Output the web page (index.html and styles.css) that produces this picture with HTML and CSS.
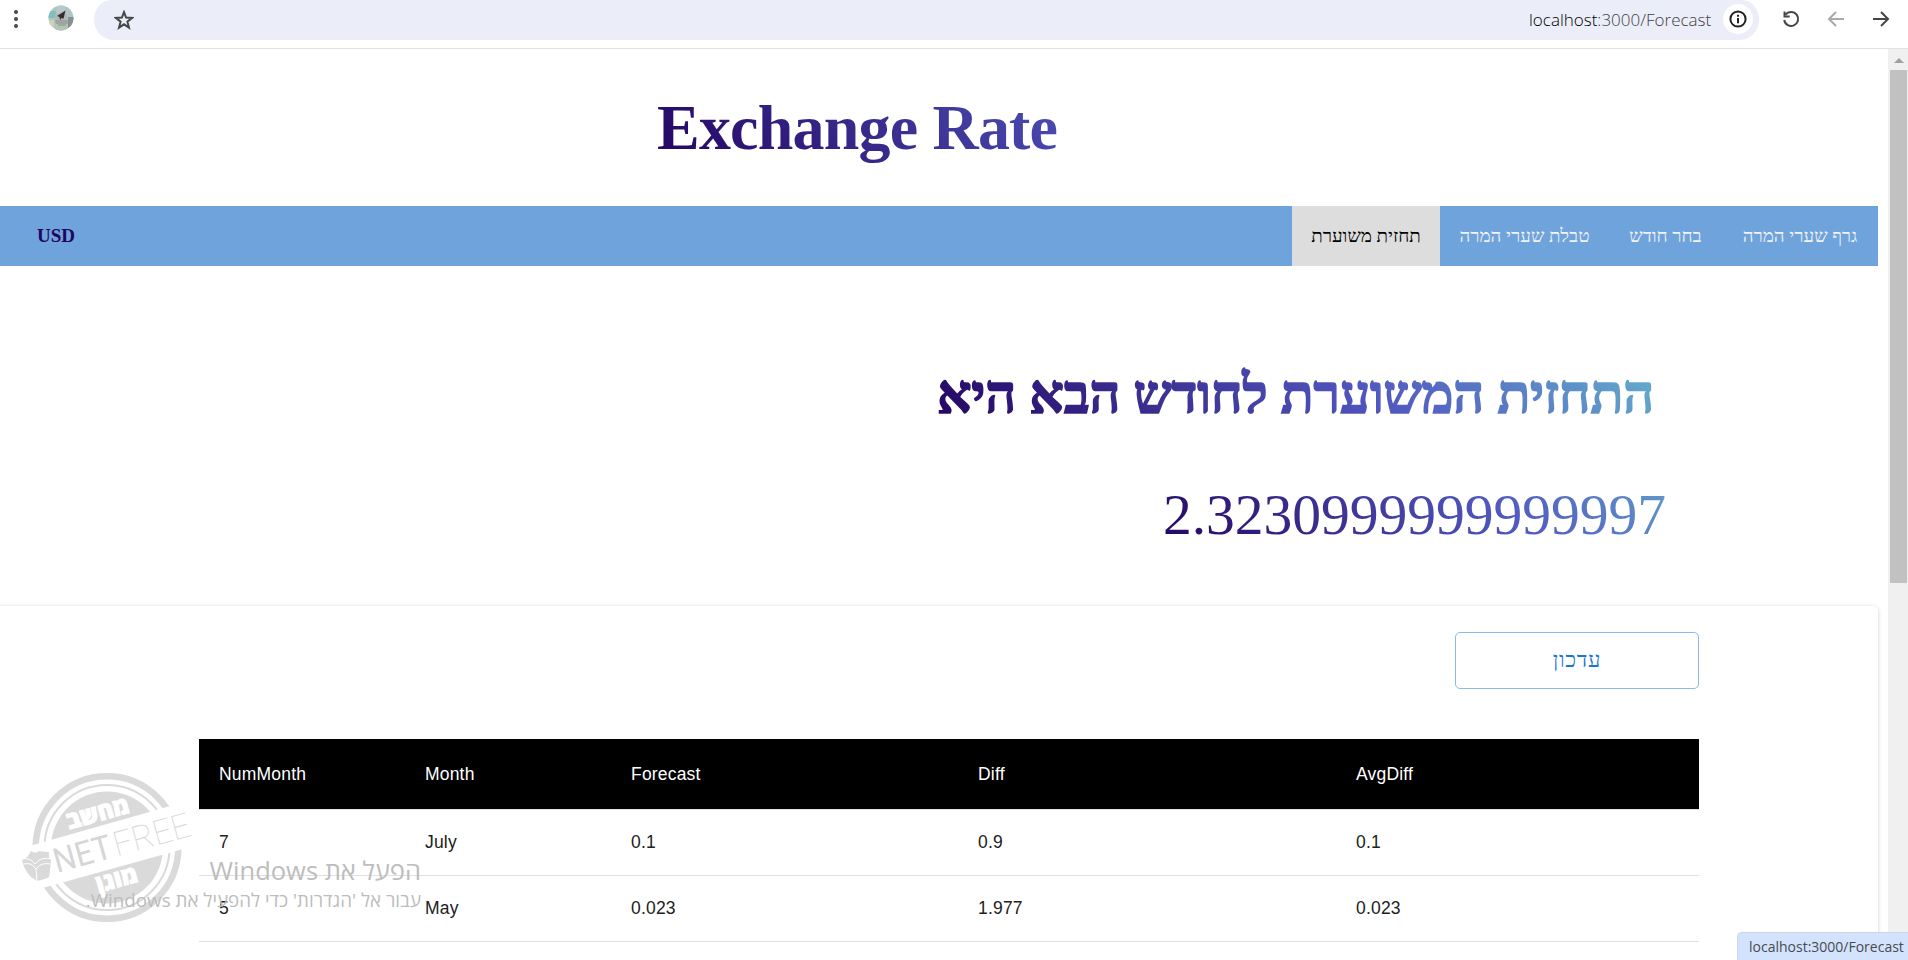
FILE: index.html
```html
<!DOCTYPE html>
<html lang="he">
<head>
<meta charset="utf-8">
<title>Exchange Rate</title>
<link rel="stylesheet" href="styles.css">
</head>
<body>
<div class="window">
  <header class="toolbar">
    <svg class="dots" width="6" height="20" viewBox="0 0 6 20"><circle cx="3" cy="3" r="2"/><circle cx="3" cy="10" r="2"/><circle cx="3" cy="17" r="2"/></svg>
    <svg class="avatar" width="26" height="26" viewBox="0 0 26 26">
      <defs><clipPath id="round"><circle cx="13" cy="13" r="12.5"/></clipPath></defs>
      <g clip-path="url(#round)">
        <rect width="26" height="26" fill="#abc6c3"/>
        <path d="M0 6h8v7H0z" fill="#7fbfbd"/><path d="M9 0h8v8H9z" fill="#b9c8ca"/>
        <path d="M7 9h12v11H7z" fill="#b3b8b6"/><path d="M20 12h6v11h-6z" fill="#83918f"/>
        <path d="M0 15h6v8H0z" fill="#cdd2b6"/><path d="M7 19h13v7H7z" fill="#b4c4b3"/>
        <path d="M17.500 5.500L9 11l2.500 1 .5 3 1.500-2 2 .8z" fill="#3a2b2c"/>
        <path d="M7 16h13M8 18h12M10 20h8" stroke="#7d8583" stroke-width=".8"/>
      </g>
    </svg>
    <div class="address">
      <svg class="star" width="20" height="20" viewBox="0 0 20 20"><path d="M10 2.100l2.100 5.500 6 .3-4.700 3.800 1.600 5.900L10 14.300l-5 3.300 1.600-5.900L1.900 7.900l6-.3z"/></svg>
      <span class="url"><b>localhost</b>:3000/Forecast</span>
      <span class="info"><svg width="18" height="18" viewBox="0 0 18 18"><circle cx="9" cy="9" r="7.600"/><path d="M9 8v5.200M9 4.700v2"/></svg></span>
    </div>
    <svg class="nav-icon" width="18" height="18" viewBox="0 0 18 18"><path d="M3.600 4.600A7 7 0 1 1 2.200 10M2.500 1.500v5h5.200"/></svg>
    <svg class="nav-icon faded" width="18" height="18" viewBox="0 0 18 18"><path d="M17 9H2.500M9 2L2 9l7 7"/></svg>
    <svg class="nav-icon" width="18" height="18" viewBox="0 0 18 18"><path d="M1 9h14.500M9 2l7 7-7 7"/></svg>
  </header>
  <div class="viewport">
    <main class="page">
      <h1 class="title"><span>Exchange Rate</span></h1>
      <nav class="menu">
        <span class="currency">USD</span>
        <a class="tab tab-forecast active" dir="rtl">תחזית משוערת</a>
        <a class="tab tab-rates" dir="rtl">טבלת שערי המרה</a>
        <a class="tab tab-month" dir="rtl">בחר חודש</a>
        <a class="tab tab-chart" dir="rtl">גרף שערי המרה</a>
      </nav>
      <h2 class="forecast-title" dir="rtl">התחזית המשוערת לחודש הבא היא</h2>
      <p class="forecast-value">2.3230999999999997</p>
      <section class="paper">
        <button class="update" dir="rtl">עדכון</button>
        <table class="rates">
          <colgroup><col class="c1"><col class="c2"><col class="c3"><col class="c4"><col class="c5"></colgroup>
          <thead><tr><th>NumMonth</th><th>Month</th><th>Forecast</th><th>Diff</th><th>AvgDiff</th></tr></thead>
          <tbody>
            <tr><td>7</td><td>July</td><td>0.1</td><td>0.9</td><td>0.1</td></tr>
            <tr><td>5</td><td>May</td><td>0.023</td><td>1.977</td><td>0.023</td></tr>
          </tbody>
        </table>
      </section>
    </main>
    <div class="scrollbar"><i class="arrow"></i><i class="thumb"></i></div>
  </div>

  <svg class="stamp" width="200" height="160" viewBox="0 0 200 160">
    <defs>
      <mask id="band"><rect width="200" height="160" fill="#fff"/><path d="M0 84.500L200 27.500V74.300L0 129.800z" fill="#000"/></mask>
    </defs>
    <g mask="url(#band)">
      <circle cx="107" cy="77.500" r="71.300" fill="none" stroke="#dadada" stroke-width="6.500"/>
      <circle cx="107" cy="77.500" r="62.500" fill="none" stroke="#dadada" stroke-width="2"/>
      <circle cx="107" cy="77.500" r="56" fill="#dadada"/>
    </g>
    <g transform="translate(57 103) rotate(-15.500)">
      <text class="net" x="0" y="0" textLength="59" lengthAdjust="spacingAndGlyphs">NET</text>
      <text class="free" x="62" y="0" textLength="79" lengthAdjust="spacingAndGlyphs">FREE</text>
    </g>
    <text class="stamp-he" transform="translate(100 51) rotate(-15.500)" textLength="64" lengthAdjust="spacingAndGlyphs">מחשב</text>
    <text class="stamp-he" transform="translate(119 117) rotate(-15.500)" textLength="42" lengthAdjust="spacingAndGlyphs">מוגן</text>
    <path d="M22 41q5-1 9-9q5 3 8 0q7 1 10 1q-1 5 2 8q-1 13-2 17q-3 2-12 4q-12-6-15-21z" transform="translate(0 49)" fill="#dadada"/>
    <path d="M21 39q9-2 14 5q6-8 17-5M24 44q8-2 12 5q5-7 14-5M36 48l1 14" transform="translate(0 50)" fill="none" stroke="#fff" stroke-width="1"/>
  </svg>
  <div class="activate" dir="rtl">
    <div class="activate-title"><span>הפעל את Windows</span></div>
    <div class="activate-text"><span>עבור אל 'הגדרות' כדי להפעיל את Windows.</span></div>
  </div>
  <div class="status">localhost:3000/Forecast</div>
</div>
</body>
</html>
```
FILE: styles.css
```css
* { box-sizing: border-box; }
body { margin: 0; background: #fff; font-family: "Liberation Serif", serif; }
.window { position: relative; width: 1908px; height: 960px; overflow: hidden; display: flex; flex-direction: column; }

/* browser toolbar */
.toolbar { height: 49px; flex: none; display: flex; align-items: flex-start; border-bottom: 1px solid #dfe1e1; }
.dots { margin: 9px 0 0 13px; fill: #444746; }
.avatar { margin: 5px 0 0 29px; }
.address { width: 1665px; height: 40px; margin-left: 20px; background: #ebeef8; border-radius: 17px 17px 20px 20px / 20px; display: flex; align-items: center; padding: 0 6px 0 20px; }
.star { fill: none; stroke: #444746; stroke-width: 2; }
.url { margin-left: auto; font: 300 17px/38px "Open Sans", sans-serif; color: #3c4045; width: 183px; white-space: nowrap; }
.url b { font-weight: 300; color: #000; }
.info { width: 30px; height: 30px; margin-left: 11px; margin-top: -2px; border-radius: 50%; background: #fff; display: grid; place-items: center; }
.info svg { fill: none; stroke: #1f2023; stroke-width: 2; }
.nav-icon { margin: 10px 0 0 23px; fill: none; stroke: #444746; stroke-width: 2; }
.nav-icon + .nav-icon { margin-left: 27px; }
.faded { stroke: #a8aaab; }

/* page */
.viewport { flex: 1; display: flex; min-height: 0; }
.page { width: 1878px; margin-right: 10px; height: 911px; }
.title, .forecast-title, .forecast-value { background: linear-gradient(45deg, #230461 0%, #5158bf 60%, #65b0cc 100%); -webkit-background-clip: text; background-clip: text; color: transparent; white-space: nowrap; }
.title { width: 820px; height: 76px; margin: 41px 0 40px 657px; font-size: 64px; line-height: 75px; letter-spacing: -.8px; }
.menu { height: 60px; background: #6ea3db; display: flex; align-items: center; font-size: 18.800px; }
.currency { margin: 0 auto 0 37px; font-weight: bold; font-size: 19px; color: #230461; }
.tab { height: 60px; line-height: 60px; color: #f2f2f2; text-align: center; white-space: nowrap; }
.tab-forecast { width: 148px; }
.tab-rates { width: 169px; }
.tab-month { width: 113px; }
.tab-chart { width: 156px; }
.active { background: #ddd; color: #000; }
.forecast-title { width: 717px; height: 70px; margin: 93px 0 0 937px; font-size: 54px; line-height: 72px; letter-spacing: -.25px; -webkit-text-stroke: 1.500px transparent; }
.forecast-value { width: 560px; height: 70px; margin: 51px 0 0 1163px; font-size: 57.600px; line-height: 69px; letter-spacing: -.05px; }
.paper { margin: 56px 0 0 -10px; height: 400px; padding: 26px 179px 0 209px; border-radius: 5px; box-shadow: 0 1px 4px rgba(0,0,0,.2); display: flex; flex-direction: column; }
.update { align-self: flex-end; width: 244px; height: 57px; border: 1px solid #8cbae8; border-radius: 5px; background: #fff; color: #1976d2; font: 22px/1 "Liberation Serif", serif; letter-spacing: .7px; padding: 0 0 2px; }
.rates { margin-top: 50px; width: 1500px; table-layout: fixed; border-collapse: separate; border-spacing: 0; font: 17.500px/25px "Liberation Sans", sans-serif; letter-spacing: .19px; color: #212121; }
.rates th { background: #000; color: #fff; font-weight: 400; line-height: 30px; }
.rates th, .rates td { text-align: left; padding: 20px; border-bottom: 1px solid #e0e0e0; }
.c1, .c2 { width: 206px; }
.c3 { width: 347px; }
.c4 { width: 378px; }
.c5 { width: 363px; }
.scrollbar { width: 20px; background: #f0f0f0; padding: 9px 1px 0 2px; }
.arrow { display: block; margin-left: 4px; width: 0; border: 5px solid transparent; border-top: 0; border-bottom-color: #a0a0a0; }
.thumb { display: block; margin-top: 7px; height: 513px; background: #c1c1c1; }

/* desktop overlays */
.stamp { position: absolute; left: 0; top: 770px; }
.stamp text { font-family: "Open Sans", sans-serif; }
.stamp .net { font-size: 34px; fill: #d6d6d6; font-family: Roboto, sans-serif; }
.stamp .free { font-size: 34px; fill: #d6d6d6; font-family: Roboto, sans-serif; font-weight: 100; }
.stamp .stamp-he { font-size: 24px; font-weight: 800; fill: #fff; stroke: #fff; stroke-width: 1; text-anchor: middle; }
.activate { position: absolute; left: 70px; top: 850px; width: 351px; color: #bdbdbd; font-family: "Open Sans", sans-serif; white-space: nowrap; }
.activate-title { font-size: 25.500px; line-height: 40px; }
.activate-text { font-size: 18.800px; line-height: 20px; }
.status { position: absolute; right: 0; bottom: 0; width: 171px; height: 28px; padding-left: 11px; background: #d3e3fd; border: 1px solid #cbd6e8; border-width: 1px 0 0 1px; border-radius: 5px 0 0 0; font: 14px/27px "Open Sans", sans-serif; color: #474b50; white-space: nowrap; }
```
